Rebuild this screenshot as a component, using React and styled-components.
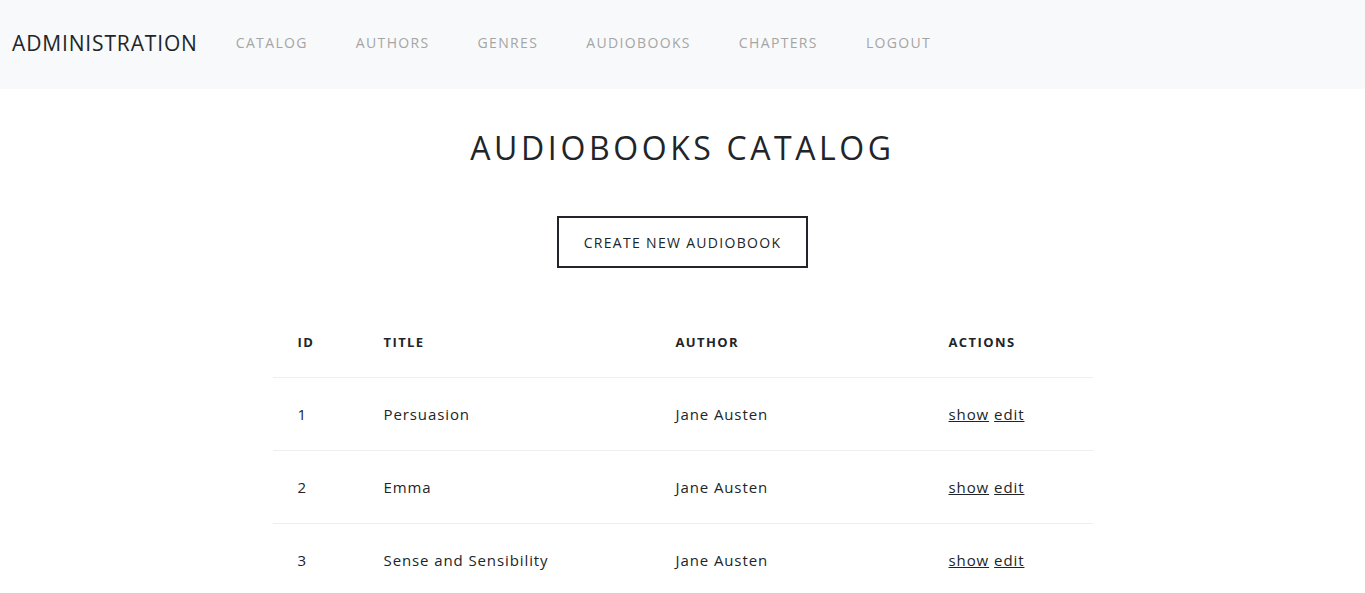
import React from 'react'
import styled, { createGlobalStyle } from 'styled-components'

const GlobalStyle = createGlobalStyle`
  body {
    margin: 0;
    background: #fff;
    font-family: "Open Sans", "Noto Sans", sans-serif;
    color: #212529;
  }
`

const NavBar = styled.nav`
  height: 89px;
  box-sizing: border-box;
  background: #f8f9fa;
  display: flex;
  align-items: center;
  padding: 0 12px 4px;
`

const Brand = styled.a`
  font-size: 21px;
  letter-spacing: 0.85px;
  color: #212529;
  text-decoration: none;
  margin-right: 14px;
`

const NavItem = styled.a`
  font-size: 14px;
  letter-spacing: 1.35px;
  color: #a5a5a5;
  text-decoration: none;
  text-transform: uppercase;
  padding: 0 24px;
`

const Main = styled.main`
  display: flex;
  flex-direction: column;
  align-items: center;
`

const Title = styled.h1`
  font-size: 32px;
  font-weight: 400;
  letter-spacing: 3.6px;
  margin: 39px 0 0;
  line-height: 40px;
`

const CreateButton = styled.a`
  margin-top: 48px;
  border: 2px solid #212529;
  padding: 0 25px;
  height: 48px;
  display: flex;
  align-items: center;
  font-size: 14px;
  letter-spacing: 1.3px;
  color: #212529;
  text-decoration: none;
`

const Table = styled.table`
  margin-top: 39px;
  width: 820px;
  border-collapse: collapse;
  table-layout: fixed;
`

const Th = styled.th`
  text-align: left;
  font-size: 13px;
  font-weight: 700;
  letter-spacing: 1.4px;
  padding: 0 25px;
  height: 70px;
  width: ${p => p.$w || 'auto'};
  box-sizing: border-box;
`

const Row = styled.tr`
  border-top: 1px solid #eceeef;
`

const Td = styled.td`
  font-size: 15px;
  letter-spacing: 0.9px;
  padding: 0 25px;
  height: 72px;
`

const ActionLink = styled.a`
  color: #212529;
  text-decoration: underline;
  margin-right: 5px;
`

const books = [
  { id: 1, title: 'Persuasion', author: 'Jane Austen' },
  { id: 2, title: 'Emma', author: 'Jane Austen' },
  { id: 3, title: 'Sense and Sensibility', author: 'Jane Austen' },
]

const links = ['Catalog', 'Authors', 'Genres', 'Audiobooks', 'Chapters', 'Logout']

export default function App() {
  return (
    <>
      <GlobalStyle />
      <NavBar>
        <Brand href="#">ADMINISTRATION</Brand>
        {links.map(l => (
          <NavItem key={l} href="#">{l}</NavItem>
        ))}
      </NavBar>
      <Main>
        <Title>AUDIOBOOKS CATALOG</Title>
        <CreateButton href="#">CREATE NEW AUDIOBOOK</CreateButton>
        <Table>
          <thead>
            <tr>
              <Th $w="86px">ID</Th>
              <Th $w="292px">TITLE</Th>
              <Th $w="273px">AUTHOR</Th>
              <Th>ACTIONS</Th>
            </tr>
          </thead>
          <tbody>
            {books.map(b => (
              <Row key={b.id}>
                <Td>{b.id}</Td>
                <Td>{b.title}</Td>
                <Td>{b.author}</Td>
                <Td>
                  <ActionLink href="#">show</ActionLink>
                  <ActionLink href="#">edit</ActionLink>
                </Td>
              </Row>
            ))}
          </tbody>
        </Table>
      </Main>
    </>
  )
}
